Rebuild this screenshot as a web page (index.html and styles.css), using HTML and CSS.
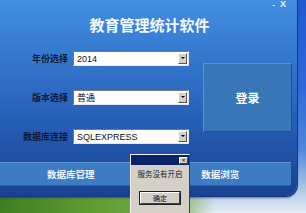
FILE: index.html
```html
<!DOCTYPE html>
<html>
<head>
<meta charset="utf-8">
<link rel="stylesheet" href="styles.css">
</head>
<body>
<div class="desktop">
  <div class="window">
    <div class="controls"><span class="min">-</span><span class="close">X</span></div>
    <div class="title">教育管理统计软件</div>
    <div class="main">
      <div class="fields">
        <div class="row">
          <span class="label">年份选择</span>
          <div class="combo"><span class="value">2014</span><span class="arrow"></span></div>
        </div>
        <div class="row">
          <span class="label">版本选择</span>
          <div class="combo"><span class="value">普通</span><span class="arrow"></span></div>
        </div>
        <div class="row">
          <span class="label">数据库连接</span>
          <div class="combo"><span class="value">SQLEXPRESS</span><span class="arrow"></span></div>
        </div>
      </div>
      <div class="login">登录</div>
    </div>
    <div class="bar">
      <div class="bar-btn">数据库管理</div>
      <div class="bar-btn right">数据浏览</div>
    </div>
  </div>
  <div class="dialog">
    <div class="dlg-title"><span class="dlg-close">✕</span></div>
    <div class="dlg-body">
      <div class="dlg-msg">服务没有开启</div>
      <div class="dlg-btn">确定</div>
    </div>
  </div>
</div>
</body>
</html>
```
FILE: styles.css
```css
html, body {
  margin: 0;
  padding: 0;
}
body {
  width: 306px;
  height: 213px;
  overflow: hidden;
  font-family: "Noto Sans CJK SC", "Liberation Sans", sans-serif;
}
.desktop {
  position: relative;
  width: 306px;
  height: 213px;
  overflow: hidden;
  background:
    linear-gradient(to right, #3f7d22 0%, #5f9c30 30%, #79a94a 55%, rgba(180,205,225,0) 70%) 0 194px / 100% 19px no-repeat,
    linear-gradient(to bottom, #2458cf 0%, #2e68d8 40%, #4f86dc 70%, #a8c4e6 88%, #e4edf6 100%);
}
.window {
  position: absolute;
  left: -10px;
  top: -10px;
  width: 297px;
  height: 196px;
  padding: 10px 0 0 10px;
  border-radius: 12px;
  background: linear-gradient(to bottom, #4592e4 0%, #3a82d6 20%, #2d69c2 50%, #2255aa 75%, #1b4191 100%);
  box-shadow: 1px 1px 0 #163a86, 0 2px 2px rgba(10,30,70,0.5);
  color: #fff;
}
.controls {
  height: 9px;
  display: flex;
  justify-content: flex-end;
  gap: 5px;
  padding-right: 11px;
  font-family: "Liberation Sans", sans-serif;
  font-weight: bold;
  font-size: 9px;
  line-height: 8px;
  color: #e8f0ff;
}
.controls .min {
  font-size: 8px;
  line-height: 9px;
}
.title {
  margin-top: 7px;
  height: 18px;
  line-height: 18px;
  text-align: center;
  padding-left: 2px;
  font-size: 15px;
  font-weight: bold;
  color: #f4f8ff;
}
.main {
  display: flex;
  margin-top: 17px;
}
.fields {
  width: 189px;
  display: flex;
  flex-direction: column;
  gap: 24px;
}
.row {
  display: flex;
  align-items: center;
  height: 15px;
}
.label {
  width: 68px;
  text-align: right;
  font-size: 9px;
  font-weight: bold;
  color: #0d1a38;
  margin-right: 5px;
  white-space: nowrap;
  line-height: 12px;
}
.combo {
  width: 116px;
  height: 15px;
  box-sizing: border-box;
  background: #fff;
  border: 1px solid;
  border-color: #7a7a7a #e8e8e8 #e8e8e8 #7a7a7a;
  display: flex;
  align-items: center;
  justify-content: space-between;
}
.value {
  padding-left: 3px;
  font-size: 9px;
  color: #111;
  font-family: "Liberation Sans", "Noto Sans CJK SC", sans-serif;
  line-height: 12px;
}
.arrow {
  width: 9px;
  height: 11px;
  margin-right: 1px;
  box-sizing: border-box;
  background: #d4d0c8;
  border: 1px solid;
  border-color: #fff #555 #555 #fff;
  position: relative;
}
.arrow::after {
  content: "";
  position: absolute;
  left: 1.5px;
  top: 3px;
  border-left: 2px solid transparent;
  border-right: 2px solid transparent;
  border-top: 2px solid #000;
}
.login {
  margin-left: 14px;
  margin-top: 12px;
  width: 89px;
  height: 69px;
  box-sizing: border-box;
  background: #3876b8;
  border: 1px solid;
  border-color: #5a94d0 #21508c #21508c #5a94d0;
  display: flex;
  align-items: center;
  justify-content: center;
  font-size: 12px;
  font-weight: bold;
  color: #fff;
}
.bar {
  display: flex;
  width: 291px;
  height: 24px;
  margin-top: 18px;
  box-sizing: border-box;
  background: #3d7cc2;
  border-top: 1px solid #5c97d4;
  border-bottom: 1px solid #2a5c9e;
}
.bar-btn {
  flex: 1;
  display: flex;
  align-items: center;
  justify-content: center;
  font-size: 9.5px;
  font-weight: bold;
  color: #f0f5ff;
}
.bar-btn.right {
  padding-left: 8px;
}
.dialog {
  position: absolute;
  left: 130px;
  top: 154px;
  width: 60px;
  height: 60px;
  box-sizing: border-box;
  background: #d4d0c8;
  border: 1px solid;
  border-color: #f0f0f0 #404040 #404040 #f0f0f0;
  display: flex;
  flex-direction: column;
}
.dlg-title {
  height: 10px;
  background: #0a246a;
  display: flex;
  justify-content: flex-end;
  align-items: center;
  padding-right: 1px;
}
.dlg-close {
  width: 9px;
  height: 7px;
  box-sizing: border-box;
  background: #d4d0c8;
  border: 1px solid;
  border-color: #fff #404040 #404040 #fff;
  font-size: 5px;
  line-height: 5px;
  text-align: center;
  color: #000;
  font-family: "DejaVu Sans", sans-serif;
  font-weight: bold;
}
.dlg-body {
  display: flex;
  flex-direction: column;
  align-items: center;
}
.dlg-msg {
  margin-top: 4px;
  font-size: 7.5px;
  line-height: 10px;
  color: #222;
}
.dlg-btn {
  margin-top: 13px;
  width: 40px;
  height: 12px;
  box-sizing: border-box;
  border: 1px solid;
  border-color: #fff #404040 #404040 #fff;
  outline: 1px solid #222;
  outline-offset: 0;
  font-size: 7px;
  line-height: 10px;
  text-align: center;
  color: #111;
}
```
